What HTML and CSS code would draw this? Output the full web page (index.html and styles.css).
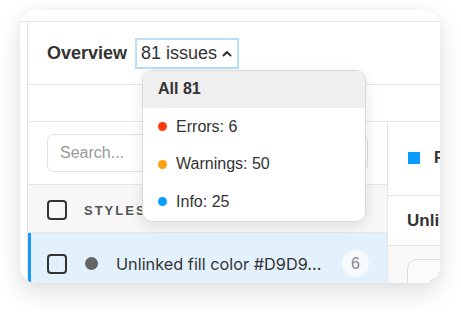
FILE: index.html
```html
<!DOCTYPE html>
<html>
<head>
<meta charset="utf-8">
<link rel="stylesheet" href="styles.css">
</head>
<body>
<div class="stage">
  <div class="card">
    <div class="frame">
      <div class="inner">
        <div class="header">
          <span class="title">Overview</span>
          <div class="issues-wrap">
            <button class="issues">81 issues <svg class="caret" viewBox="0 0 10 7" width="10" height="7"><polyline points="1.5,5.5 5,2 8.5,5.5"/></svg></button>
            <div class="menu">
              <div class="menu-item all">All 81</div>
              <div class="menu-item"><span class="dot red"></span>Errors: 6</div>
              <div class="menu-item"><span class="dot orange"></span>Warnings: 50</div>
              <div class="menu-item"><span class="dot blue"></span>Info: 25</div>
            </div>
          </div>
        </div>
        <div class="tabs"></div>
        <div class="panels">
          <div class="left">
            <div class="search-row"><div class="search">Search...</div></div>
            <div class="list-head"><span class="checkbox"></span><span class="head-label">Styles</span></div>
            <div class="list-row"><span class="checkbox"></span><span class="gray-dot"></span><span class="row-text">Unlinked fill color #D9D9...</span><span class="badge">6</span></div>
          </div>
          <div class="right">
            <div class="r-head"><span class="square"></span><span class="r-head-text">Fill colors</span></div>
            <div class="r-title">Unlinked fill color</div>
            <div class="r-body"><div class="r-box"><span class="r-circle"></span></div></div>
          </div>
        </div>
      </div>
    </div>
  </div>
</div>
</body>
</html>
```
FILE: styles.css
```css
html, body {
  margin: 0;
  padding: 0;
  background: #fff;
}
body {
  font-family: "Liberation Sans", Arial, sans-serif;
  color: #333;
  width: 461px;
  height: 312px;
  overflow: hidden;
}
.stage {
  padding: 10px 21px 0 20px;
  box-sizing: border-box;
  width: 461px;
  height: 312px;
}
.card {
  width: 420px;
  height: 273px;
  border-radius: 16px;
  background: #fff;
  box-shadow: 0 10px 26px rgba(0, 0, 0, 0.12), 0 0 8px rgba(0, 0, 0, 0.04);
  overflow: hidden;
  padding-top: 11px;
  box-sizing: border-box;
}
.frame {
  border-top: 1px solid #e4e4e4;
  height: 100%;
}
.inner {
  margin-left: 7px;
  border-left: 1px solid #e4e4e4;
  height: 100%;
}
.header {
  height: 62px;
  border-bottom: 1px solid #e6e6e6;
  display: flex;
  align-items: center;
  padding-left: 19px;
  gap: 8px;
}
.title {
  font-weight: bold;
  font-size: 18px;
}
.issues-wrap {
  position: relative;
}
.issues {
  font-family: "Liberation Sans", Arial, sans-serif;
  font-size: 18px;
  color: #333;
  background: #fff;
  border: 2px solid #b8dff8;
  height: 31px;
  margin: 0;
  padding: 0 5px 0 4px;
  display: flex;
  align-items: center;
  gap: 5px;
}
.caret {
  fill: none;
  stroke: #333;
  stroke-width: 2;
  stroke-linecap: round;
  stroke-linejoin: round;
}
.menu {
  position: absolute;
  left: 7px;
  top: 32px;
  width: 224px;
  box-sizing: border-box;
  border: 1px solid #dadada;
  border-radius: 10px;
  background: #fff;
  box-shadow: 0 4px 14px rgba(0, 0, 0, 0.1);
  overflow: hidden;
  z-index: 5;
}
.menu-item {
  height: 37.5px;
  display: flex;
  align-items: center;
  padding-left: 15px;
  font-size: 16px;
  gap: 9px;
}
.menu-item.all {
  background: #efefef;
  font-weight: bold;
}
.dot {
  width: 9px;
  height: 9px;
  border-radius: 50%;
}
.dot.red { background: #ff3b0a; }
.dot.orange { background: #ffa10a; }
.dot.blue { background: #0a9dff; }
.tabs {
  height: 36px;
  border-bottom: 1px solid #e6e6e6;
}
.panels {
  display: flex;
}
.left {
  width: 359px;
  flex: none;
  border-right: 1px solid #e6e6e6;
}
.search-row {
  height: 63px;
  box-sizing: border-box;
  border-bottom: 1px solid #e6e6e6;
  padding: 12px 19px 0;
}
.search {
  height: 38px;
  box-sizing: border-box;
  border: 1px solid #e0e0e0;
  border-radius: 7px;
  padding-left: 12px;
  display: flex;
  align-items: center;
  color: #999;
  font-size: 16px;
}
.list-head {
  height: 48px;
  box-sizing: border-box;
  border-bottom: 1px solid #e6e6e6;
  background: #f7f7f7;
  display: flex;
  align-items: center;
  padding: 3px 0 0 19px;
  gap: 17px;
}
.checkbox {
  width: 20px;
  height: 20px;
  box-sizing: border-box;
  border: 2px solid #333;
  border-radius: 4px;
  flex: none;
}
.head-label {
  text-transform: uppercase;
  font-weight: bold;
  font-size: 13px;
  letter-spacing: 2px;
  color: #555;
}
.list-row {
  height: 61px;
  box-sizing: border-box;
  background: #e3f1fd;
  border-left: 3px solid #1a9af5;
  display: flex;
  align-items: center;
  padding: 0 18px 0 16px;
}
.gray-dot {
  width: 13px;
  height: 13px;
  border-radius: 50%;
  background: #666;
  margin-left: 18px;
  flex: none;
}
.row-text {
  font-family: Inter, "Liberation Sans", sans-serif;
  font-size: 16.3px;
  color: #333;
  margin-left: 18px;
  white-space: nowrap;
}
.badge {
  margin-left: auto;
  width: 27px;
  height: 27px;
  border-radius: 50%;
  background: #f7fafd;
  color: #888;
  font-size: 16px;
  display: flex;
  align-items: center;
  justify-content: center;
  flex: none;
}
.right {
  flex: 1;
  min-width: 0;
  overflow: hidden;
}
.r-head {
  height: 74px;
  box-sizing: border-box;
  border-bottom: 1px solid #e6e6e6;
  display: flex;
  align-items: center;
  padding: 0 0 2px 20px;
  gap: 14px;
  white-space: nowrap;
}
.square {
  width: 12px;
  height: 12px;
  background: #0a9cff;
  flex: none;
}
.r-head-text {
  font-weight: bold;
  font-size: 16px;
}
.r-title {
  height: 50px;
  box-sizing: border-box;
  border-bottom: 1px solid #e6e6e6;
  display: flex;
  align-items: center;
  padding-left: 19px;
  font-weight: bold;
  font-size: 17px;
  white-space: nowrap;
}
.r-body {
  background: #f8f8f8;
  padding: 13px 0 0 19px;
  height: 60px;
}
.r-box {
  width: 100px;
  height: 60px;
  box-sizing: border-box;
  border: 1px solid #dcdcdc;
  border-radius: 10px;
  background: #fbfbfb;
  padding: 18px 0 0 20px;
}
.r-circle {
  display: block;
  width: 16px;
  height: 16px;
  border-radius: 50%;
  border: 1px solid #cfcfcf;
  background: #eee;
}
```
